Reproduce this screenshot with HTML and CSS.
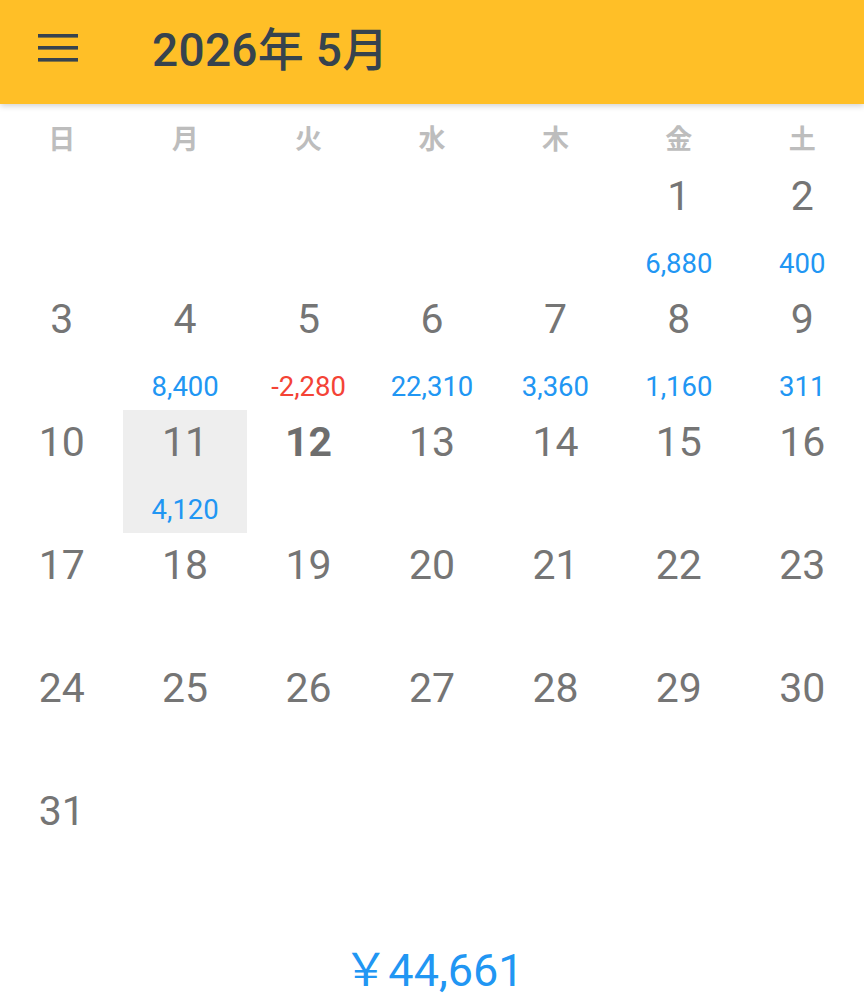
FILE: index.html
```html
<!DOCTYPE html>
<html lang="ja">
<head>
<meta charset="utf-8">
<link rel="stylesheet" href="styles.css">
</head>
<body>
<header class="appbar">
  <svg class="menu" width="40" height="28" viewBox="0 0 40 28"><rect x="0" y="0" width="40" height="3.6" fill="#37434e"/><rect x="0" y="12" width="40" height="3.6" fill="#37434e"/><rect x="0" y="24" width="40" height="3.6" fill="#37434e"/></svg>
  <h1 class="title">2026年 5月</h1>
</header>
<div class="weekdays">
  <div>日</div><div>月</div><div>火</div><div>水</div><div>木</div><div>金</div><div>土</div>
</div>
<div class="grid">
  <div class="cell"></div><div class="cell"></div><div class="cell"></div><div class="cell"></div><div class="cell"></div>
  <div class="cell"><div class="day">1</div><div class="amt">6,880</div></div>
  <div class="cell"><div class="day">2</div><div class="amt">400</div></div>

  <div class="cell"><div class="day">3</div></div>
  <div class="cell"><div class="day">4</div><div class="amt">8,400</div></div>
  <div class="cell"><div class="day">5</div><div class="amt neg">-2,280</div></div>
  <div class="cell"><div class="day">6</div><div class="amt">22,310</div></div>
  <div class="cell"><div class="day">7</div><div class="amt">3,360</div></div>
  <div class="cell"><div class="day">8</div><div class="amt">1,160</div></div>
  <div class="cell"><div class="day">9</div><div class="amt">311</div></div>

  <div class="cell"><div class="day">10</div></div>
  <div class="cell selected"><div class="day">11</div><div class="amt">4,120</div></div>
  <div class="cell"><div class="day today">12</div></div>
  <div class="cell"><div class="day">13</div></div>
  <div class="cell"><div class="day">14</div></div>
  <div class="cell"><div class="day">15</div></div>
  <div class="cell"><div class="day">16</div></div>

  <div class="cell"><div class="day">17</div></div>
  <div class="cell"><div class="day">18</div></div>
  <div class="cell"><div class="day">19</div></div>
  <div class="cell"><div class="day">20</div></div>
  <div class="cell"><div class="day">21</div></div>
  <div class="cell"><div class="day">22</div></div>
  <div class="cell"><div class="day">23</div></div>

  <div class="cell"><div class="day">24</div></div>
  <div class="cell"><div class="day">25</div></div>
  <div class="cell"><div class="day">26</div></div>
  <div class="cell"><div class="day">27</div></div>
  <div class="cell"><div class="day">28</div></div>
  <div class="cell"><div class="day">29</div></div>
  <div class="cell"><div class="day">30</div></div>

  <div class="cell"><div class="day">31</div></div>
  <div class="cell"></div><div class="cell"></div><div class="cell"></div><div class="cell"></div><div class="cell"></div><div class="cell"></div>
</div>
<div class="total">￥44,661</div>
</body>
</html>
```
FILE: styles.css
```css
* { box-sizing: border-box; }
html, body { margin: 0; padding: 0; background: #fff; }
body {
  width: 864px;
  height: 1001px;
  overflow: hidden;
  font-family: Roboto, "Noto Sans CJK JP", sans-serif;
}
.appbar {
  position: relative;
  z-index: 2;
  height: 104px;
  background: #ffbf27;
  display: flex;
  align-items: center;
  padding-left: 38px;
  box-shadow: 0 2px 6px rgba(0,0,0,0.18);
}
.menu { display: block; margin-top: -8px; }
.title {
  margin: -12px 0 0 74px;
  font-size: 46px;
  font-weight: 500;
  color: #36434e;
  letter-spacing: 0.3px;
}
.weekdays {
  display: grid;
  grid-template-columns: repeat(7, 1fr);
  height: 60px;
  align-items: center;
  padding-top: 6px;
}
.weekdays div {
  text-align: center;
  font-family: "Noto Sans CJK JP", sans-serif;
  font-weight: 700;
  font-size: 27px;
  color: #bdbdbd;
}
.grid {
  display: grid;
  grid-template-columns: repeat(7, 1fr);
  grid-auto-rows: 123px;
}
.cell {
  display: flex;
  flex-direction: column;
  align-items: center;
}
.cell.selected { background: #eeeeee; }
.day {
  height: 64px;
  line-height: 64px;
  font-size: 41px;
  color: #757575;
}
.day.today { font-weight: 700; color: #6e6e6e; }
.amt {
  margin-top: 18px;
  height: 36px;
  line-height: 36px;
  font-size: 27.5px;
  color: #2196f3;
}
.amt.neg { color: #f44336; }
.total {
  text-align: center;
  font-size: 45px;
  color: #2196f3;
  padding-top: 32px;
  padding-left: 3px;
}
```
